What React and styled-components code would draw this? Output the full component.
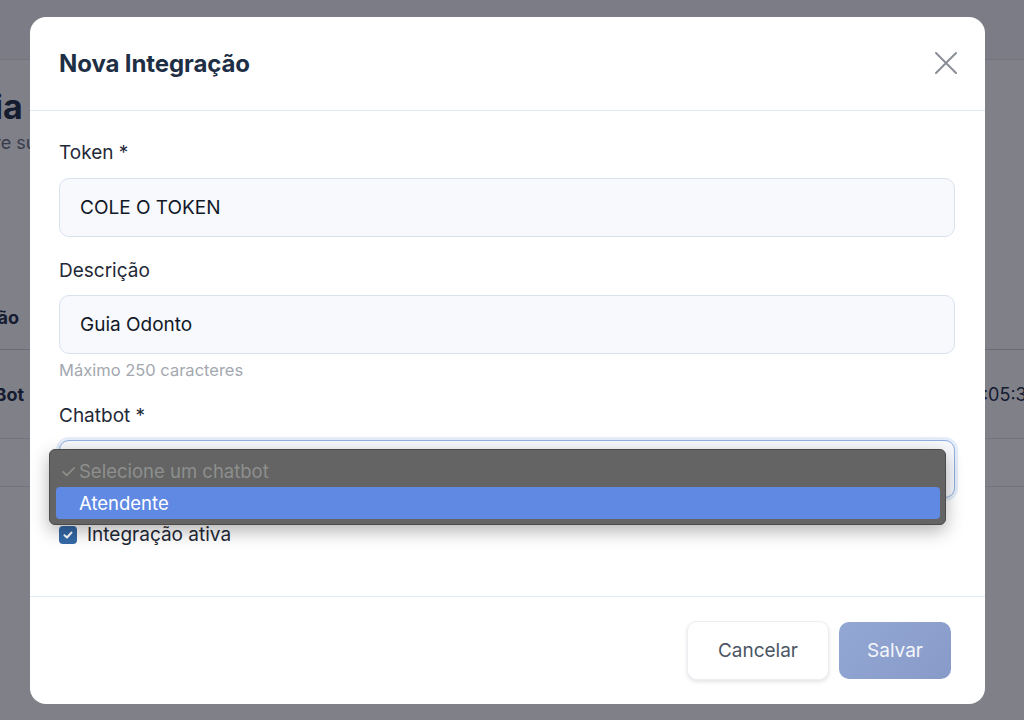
import styled, { createGlobalStyle } from 'styled-components'

const GlobalStyle = createGlobalStyle`
  * { box-sizing: border-box; }
  html, body {
    margin: 0;
    padding: 0;
    width: 1024px;
    height: 720px;
    overflow: hidden;
    background: #ffffff;
    font-family: Inter, 'Noto Sans', 'Liberation Sans', sans-serif;
  }
`

const Page = styled.div`
  position: relative;
  width: 1024px;
  height: 720px;
  background: #ffffff;
  overflow: hidden;
`

const PageHeader = styled.div`
  height: 60px;
  background: #f7f7f9;
  border-bottom: 1px solid #e4e6ec;
`

const PageMain = styled.div`
  margin-left: -73px;
  padding-top: 23px;
`

const PageTitle = styled.h1`
  margin: 0 0 0 ${(p) => p.$ml || 0}px;
  font-size: 34px;
  line-height: 48px;
  font-weight: 700;
  color: #1e2f45;
`

const PageSubtitle = styled.p`
  margin: 0;
  font-size: 18px;
  line-height: 24px;
  color: #6b7280;
`

const Table = styled.div`
  margin-top: 130px;
  width: 1107px;
  border-bottom: 1px solid #e5e7eb;
  padding-bottom: 47px;
`

const TableRow = styled.div`
  display: flex;
  justify-content: space-between;
  align-items: center;
  height: ${(p) => p.$h}px;
  border-bottom: 1px solid ${(p) => (p.$head ? '#cfd5de' : '#e5e7eb')};
  font-size: 18px;
  color: #1e2f45;
`

const Cell = styled.span`
  margin-left: ${(p) => p.$ml || 0}px;
  font-weight: ${(p) => (p.$bold ? 700 : 400)};
`

const Overlay = styled.div`
  position: absolute;
  inset: 0;
  background: rgba(12, 12, 28, 0.52);
  display: flex;
  align-items: center;
  justify-content: center;
  padding-right: 9px;
`

const Modal = styled.div`
  width: 955px;
  background: #ffffff;
  border-radius: 16px;
  display: flex;
  flex-direction: column;
`

const ModalHeader = styled.div`
  height: 94px;
  padding: 0 27px 0 29px;
  display: flex;
  align-items: center;
  justify-content: space-between;
  border-bottom: 1px solid #dde8f5;
`

const Title = styled.h2`
  margin: 0;
  font-size: 24px;
  font-weight: 700;
  color: #1e2f45;
  letter-spacing: -0.1px;
`

const CloseButton = styled.button`
  border: none;
  background: none;
  padding: 0;
  width: 24px;
  height: 24px;
  display: flex;
  align-items: center;
  justify-content: center;
  color: #8a8f97;
  cursor: pointer;
`

const Body = styled.div`
  padding: 30px 30px 51px 29px;
  display: flex;
  flex-direction: column;
`

const Field = styled.div`
  display: flex;
  flex-direction: column;
  margin-bottom: ${(p) => p.$mb ?? 22}px;
`

const Label = styled.label`
  font-size: 19px;
  line-height: 24px;
  color: #1f2937;
  margin-bottom: ${(p) => p.$mb ?? 13}px;
`

const Input = styled.div`
  height: 59px;
  border: 1px solid #d9e3ef;
  background: #f7f9fc;
  border-radius: 10px;
  padding: 0 20px;
  display: flex;
  align-items: center;
  font-size: 19px;
  color: #111827;
`

const Helper = styled.div`
  margin-top: 6px;
  font-size: 16.5px;
  line-height: 20px;
  color: #a3a8b0;
`

const SelectWrap = styled.div`
  position: relative;
`

const Select = styled.div`
  height: 58px;
  margin-top: 1px;
  border: 1px solid #8fb0e0;
  background: #f7f9fc;
  border-radius: 10px;
  box-shadow: 0 0 0 3px #e4edf9;
`

const Menu = styled.div`
  position: absolute;
  left: -10px;
  top: 10px;
  width: 897px;
  padding: 5px 5px 5px 6px;
  background: #636463;
  border: 1px solid #4b4b4b;
  border-radius: 6px;
  box-shadow: 0 6px 18px rgba(0, 0, 0, 0.3);
  z-index: 2;
`

const MenuItem = styled.div`
  position: relative;
  height: 32px;
  border-radius: 4px;
  padding-left: 23px;
  display: flex;
  align-items: center;
  font-size: 18.5px;
  background: ${(p) => (p.$active ? '#5f89e3' : 'transparent')};
  color: ${(p) => (p.$disabled ? '#8e8f8e' : '#ffffff')};
`

const Check = styled.span`
  position: absolute;
  left: 4px;
  top: 50%;
  transform: translateY(-48%);
  font-size: 19px;
  color: #8e8f8e;
`

const CheckRow = styled.div`
  display: flex;
  align-items: center;
  gap: 10px;
  margin-top: 27px;
  font-size: 19px;
  line-height: 20px;
  color: #1f2937;
`

const CheckBox = styled.span`
  width: 18px;
  height: 18px;
  border-radius: 4px;
  background: #3469a8;
  display: flex;
  align-items: center;
  justify-content: center;
`

const Footer = styled.div`
  border-top: 1px solid #e3ebf5;
  padding: 24px 34px 24px 29px;
  display: flex;
  justify-content: flex-end;
  gap: 10px;
`

const Button = styled.button`
  height: ${(p) => (p.$primary ? 57 : 59)}px;
  margin-top: ${(p) => (p.$primary ? 1 : 0)}px;
  padding: 0 ${(p) => (p.$primary ? 28 : 30)}px;
  border-radius: 10px;
  font-family: inherit;
  font-size: 19px;
  border: ${(p) => (p.$primary ? 'none' : '1px solid #eceef2')};
  background: ${(p) =>
    p.$primary ? 'linear-gradient(135deg, #93a7d5, #889bc8)' : '#ffffff'};
  color: ${(p) => (p.$primary ? '#f4f6fb' : '#4b5563')};
  box-shadow: ${(p) =>
    p.$primary ? 'none' : '0 2px 4px rgba(17, 24, 39, 0.12)'};
  cursor: pointer;
`

export default function App() {
  return (
    <Page>
      <GlobalStyle />
      <PageHeader />
      <PageMain>
        <PageTitle $ml={20}>Guia</PageTitle>
        <PageSubtitle>Configure suas integrações</PageSubtitle>
        <Table>
          <TableRow $h={65} $head>
            <Cell $bold $ml={3}>Descrição</Cell>
          </TableRow>
          <TableRow $h={89}>
            <Cell $bold $ml={-46}>Guia Odonto Bot</Cell>
            <Cell>12/03/2024 10:05:31</Cell>
          </TableRow>
        </Table>
      </PageMain>
      <Overlay>
        <Modal>
          <ModalHeader>
            <Title>Nova Integração</Title>
            <CloseButton aria-label="Fechar">
              <svg width="22" height="22" viewBox="0 0 22 22">
                <path
                  d="M1 1 L21 21 M21 1 L1 21"
                  stroke="currentColor"
                  strokeWidth="2"
                  strokeLinecap="round"
                />
              </svg>
            </CloseButton>
          </ModalHeader>
          <Body>
            <Field>
              <Label>Token *</Label>
              <Input>COLE O TOKEN</Input>
            </Field>
            <Field $mb={24}>
              <Label $mb={12}>Descrição</Label>
              <Input>Guia Odonto</Input>
              <Helper>Máximo 250 caracteres</Helper>
            </Field>
            <Field $mb={0}>
              <Label $mb={11}>Chatbot *</Label>
              <SelectWrap>
                <Select />
                <Menu>
                  <MenuItem $disabled>
                    <Check>✓</Check>
                    Selecione um chatbot
                  </MenuItem>
                  <MenuItem $active>Atendente</MenuItem>
                </Menu>
              </SelectWrap>
            </Field>
            <CheckRow>
              <CheckBox>
                <svg width="12" height="12" viewBox="0 0 12 12">
                  <path
                    d="M2.5 6.2 L5 8.5 L9.5 3.5"
                    fill="none"
                    stroke="#ffffff"
                    strokeWidth="2"
                    strokeLinecap="round"
                    strokeLinejoin="round"
                  />
                </svg>
              </CheckBox>
              Integração ativa
            </CheckRow>
          </Body>
          <Footer>
            <Button>Cancelar</Button>
            <Button $primary>Salvar</Button>
          </Footer>
        </Modal>
      </Overlay>
    </Page>
  )
}
